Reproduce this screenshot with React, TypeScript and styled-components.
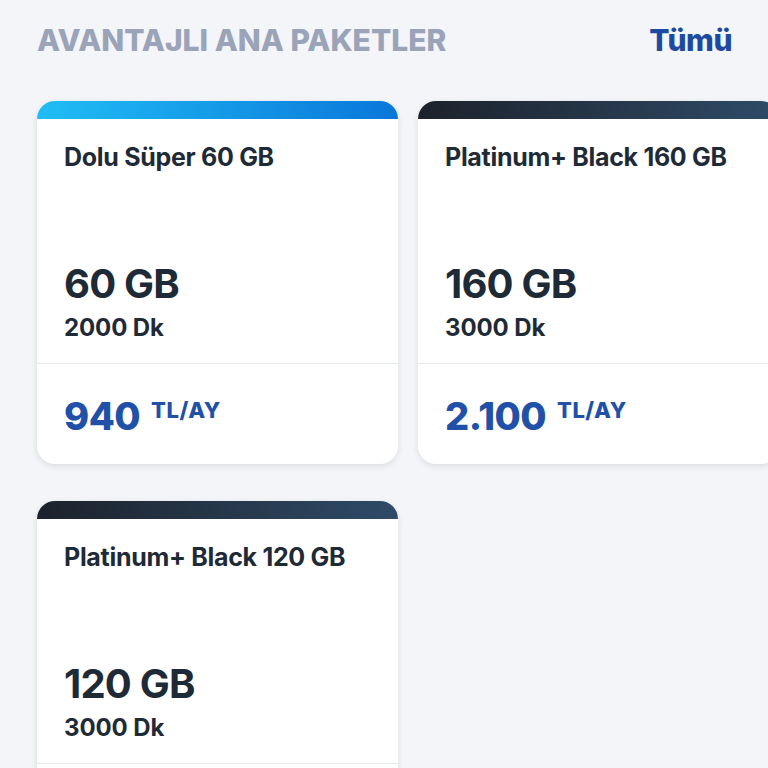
import React from 'react';
import styled, { createGlobalStyle } from 'styled-components';

const GlobalStyle = createGlobalStyle`
  html, body {
    margin: 0;
    background: #f3f5f8;
    font-family: Inter, "Noto Sans", sans-serif;
  }
`;

const Page = styled.div`
  height: 768px;
  overflow: hidden;
  padding: 22px 0 0 37px;
  box-sizing: border-box;
`;

const Header = styled.div`
  align-items: center;
  display: flex;
  justify-content: space-between;
  padding-right: 36px;
  height: 36px;
`;

const Heading = styled.h2`
  color: #9aa3b8;
  font-size: 30px;
  font-weight: 800;
  letter-spacing: 0;
  line-height: 36px;
  margin: 0;
`;

const AllLink = styled.a`
  color: #1d4aa0;
  font-size: 30px;
  font-weight: 800;
  letter-spacing: -0.5px;
  line-height: 36px;
  cursor: pointer;
`;

const Grid = styled.div`
  display: grid;
  grid-template-columns: 361px 361px;
  column-gap: 20px;
  row-gap: 37px;
  margin-top: 43px;
`;

const Card = styled.div`
  background: #fff;
  border-radius: 18px;
  box-shadow: 0 2px 6px rgba(30, 40, 60, 0.12);
  overflow: hidden;
`;

const Strip = styled.div<{ $variant: 'blue' | 'dark' }>`
  height: 18px;
  background: ${({ $variant }) =>
    $variant === 'blue'
      ? 'linear-gradient(90deg, #20bdf5 0%, #0a77da 100%)'
      : 'linear-gradient(90deg, #1c222b 0%, #2f4b68 100%)'};
`;

const Body = styled.div`
  padding: 23px 27px 0;
  height: 245px;
  display: flex;
  flex-direction: column;
  box-sizing: border-box;
  border-bottom: 1px solid #e4e7ec;
`;

const Title = styled.div`
  color: #1f2a37;
  font-size: 25px;
  font-weight: 700;
  letter-spacing: -0.3px;
  line-height: 30px;
`;

const Data = styled.div`
  color: #1f2a37;
  font-size: 40px;
  font-weight: 700;
  letter-spacing: -0.8px;
  line-height: 44px;
  margin-top: auto;
`;

const Minutes = styled.div`
  color: #1f2a37;
  font-size: 24px;
  font-weight: 700;
  letter-spacing: -0.1px;
  line-height: 30px;
  margin: 7px 0 20px;
`;

const PriceRow = styled.div`
  display: flex;
  align-items: flex-start;
  gap: 11px;
  padding: 32px 27px 0;
  height: 100px;
  box-sizing: border-box;
`;

const Price = styled.span`
  color: #2150a8;
  font-size: 38px;
  font-weight: 800;
  letter-spacing: -0.5px;
  line-height: 40px;
`;

const Unit = styled.span`
  color: #2150a8;
  font-size: 22px;
  font-weight: 800;
  letter-spacing: 0.5px;
  line-height: 22px;
  margin-top: 3px;
`;

type Pack = {
  name: string;
  data: string;
  minutes: string;
  price: string;
  variant: 'blue' | 'dark';
};

const packs: Pack[] = [
  { name: 'Dolu Süper 60 GB', data: '60 GB', minutes: '2000 Dk', price: '940', variant: 'blue' },
  { name: 'Platinum+ Black 160 GB', data: '160 GB', minutes: '3000 Dk', price: '2.100', variant: 'dark' },
  { name: 'Platinum+ Black 120 GB', data: '120 GB', minutes: '3000 Dk', price: '1.700', variant: 'dark' },
];

const App = () => (
  <>
    <GlobalStyle />
    <Page>
      <Header>
        <Heading>AVANTAJLI ANA PAKETLER</Heading>
        <AllLink>Tümü</AllLink>
      </Header>
      <Grid>
        {packs.map((p) => (
          <Card key={p.name}>
            <Strip $variant={p.variant} />
            <Body>
              <Title>{p.name}</Title>
              <Data>{p.data}</Data>
              <Minutes>{p.minutes}</Minutes>
            </Body>
            <PriceRow>
              <Price>{p.price}</Price>
              <Unit>TL/AY</Unit>
            </PriceRow>
          </Card>
        ))}
      </Grid>
    </Page>
  </>
);

export default App;
